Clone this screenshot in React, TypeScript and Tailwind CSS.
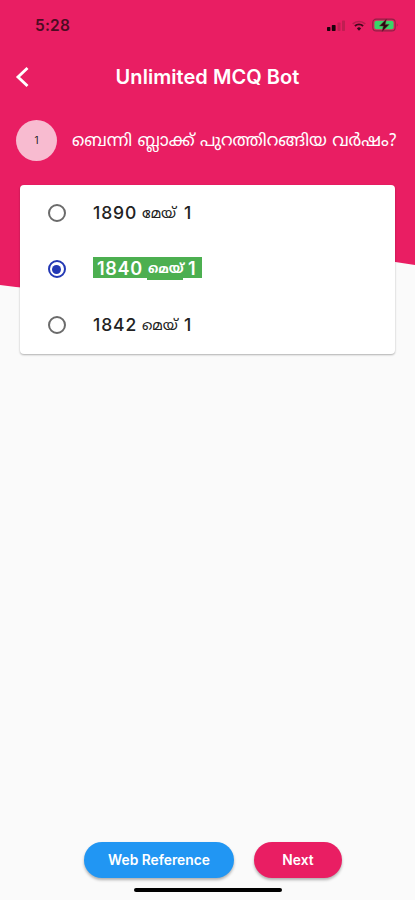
const latin = "font-[Inter,'Liberation_Sans',sans-serif]";
const malayalam =
  "font-['Noto_Sans_Malayalam','Malayalam_Sangam_MN','Noto_Sans',sans-serif]";

function StatusIcons() {
  return (
    <svg width="72" height="18" viewBox="0 0 72 18" className="block">
      <rect x="0" y="11" width="3.4" height="4" rx=".7" fill="#19030b" />
      <rect x="4.8" y="9" width="3.8" height="6" rx=".7" fill="#19030b" />
      <rect x="10.5" y="6.5" width="3" height="8.5" rx=".7" fill="#c01e52" />
      <rect x="15" y="4.5" width="3" height="10.5" rx=".7" fill="#c01e52" />
      <path d="M25.7 7.8a9.6 9.6 0 0 1 12.6 0" fill="none" stroke="#b51d4d" strokeWidth="1.6" />
      <path d="M27.9 10a6 6 0 0 1 8.2 0" fill="none" stroke="#42091c" strokeWidth="1.9" />
      <path d="M29.9 12.4a3 3 0 0 1 4.2 0l-2.1 2.4z" fill="#32091a" />
      <rect x="45.8" y="3.1" width="22.4" height="11.8" rx="3.4" fill="none" stroke="#8f2145" strokeWidth="1.1" />
      <rect x="47.4" y="4.7" width="19.2" height="8.6" rx="2" fill="#39d568" />
      <path d="M69.8 7.2q1.7 1.7 0 3.5z" fill="#8f2145" />
      <path d="M59.5 2.9 52.5 10h3.9l-1.3 5.5 7-7.1h-4z" fill="#26070f" stroke="#7c2038" strokeWidth=".5" />
    </svg>
  );
}

function Radio({ checked }: { checked?: boolean }) {
  return (
    <span
      className={
        checked
          ? "flex size-[18px] shrink-0 items-center justify-center rounded-full border-2 border-[#2338b4]"
          : "flex size-[18px] shrink-0 items-center justify-center rounded-full border-2 border-[#6b6b6b]"
      }
    >
      {checked && <span className="size-[9px] rounded-full bg-[#2338b4]" />}
    </span>
  );
}

function Option({ year, word, checked }: { year: string; word: string; checked?: boolean }) {
  return (
    <label className="flex h-[56px] items-center pl-[27.5px]">
      <Radio checked={checked} />
      {checked ? (
        <span className={`ml-[27.5px] flex h-[21px] w-[109px] -translate-y-[2px] items-start bg-[#4caf50] pl-1 text-[18px] leading-[23px] font-semibold text-white ${latin}`}>
          <span className="w-[50px] whitespace-nowrap tracking-[0.7px]">{year}</span>
          <span className={`h-[23px] w-[36px] bg-[#4caf50] pl-px text-[13px] leading-[27px] font-bold whitespace-nowrap ${malayalam}`}>{word}</span>
          <span className="ml-[5px]">1</span>
        </span>
      ) : (
        <span className={`ml-[27.5px] flex h-[21px] -translate-y-[1px] items-start text-[17.5px] leading-[21px] font-medium text-[#222] ${latin}`}>
          <span className="w-[49px] whitespace-nowrap tracking-[0.9px]">{year}</span>
          <span className={`w-[36px] text-[14.5px] leading-[26px] font-normal whitespace-nowrap ${malayalam}`}>{word}</span>
          <span className="ml-[6px]">1</span>
        </span>
      )}
    </label>
  );
}

export default function App() {
  return (
    <div className={`relative flex h-[900px] w-[415px] flex-col overflow-hidden bg-[#fafafa] ${latin}`}>
      <svg className="absolute inset-x-0 top-0" width="415" height="300" viewBox="0 0 415 300">
        <path d="M0 0H415V265Q311 248 208 273Q104 300 0 285Z" fill="#e91e63" />
      </svg>

      <div className="relative flex h-[50px] shrink-0 items-center justify-between pr-[16px] pl-[35px]">
        <span className="pt-[2px] text-[15.5px] font-semibold tracking-[0.2px] text-[#4d0b22]">5:28</span>
        <StatusIcons />
      </div>

      <header className="relative flex h-[54px] shrink-0 items-center">
        <svg width="32" height="24" viewBox="0 0 32 24" className="absolute left-0">
          <path d="M27.5 3 18 12l9.5 9" fill="none" stroke="white" strokeWidth="2.9" />
        </svg>
        <h1 className="w-full text-center text-[20px] font-semibold tracking-[0.05px] text-white">Unlimited MCQ Bot</h1>
      </header>

      <div className="relative flex h-[73px] shrink-0 items-center pl-4">
        <span className="flex size-[41px] shrink-0 items-center justify-center rounded-full bg-[#f8bbd0] text-[10px] text-[#222]">1</span>
        <p className={`ml-[15px] translate-y-px whitespace-nowrap text-[17.2px] leading-6 text-white ${malayalam}`}>ബെന്നി ബ്ലാക്ക് പുറത്തിറങ്ങിയ വർഷം?</p>
      </div>

      <main className="relative mx-5 mt-2 h-[169px] shrink-0 rounded-[4px] bg-white shadow-[0_1px_2px_rgba(0,0,0,0.3)]">
        <Option year="1890" word="മേയ്" />
        <Option year="1840" word="മെയ്" checked />
        <Option year="1842" word="മെയ്" />
      </main>

      <footer className="mt-auto flex h-[58px] shrink-0 flex-col">
        <div className="flex gap-[20px] pl-[84px]">
          <button className="h-[36px] w-[150px] rounded-full bg-[#2196f3] text-[13.8px] font-semibold text-white shadow-[0_2px_3px_rgba(0,0,0,0.3)]">Web Reference</button>
          <button className="h-[36px] w-[88px] rounded-full bg-[#e91e63] text-[13.8px] font-semibold text-white shadow-[0_2px_3px_rgba(0,0,0,0.3)]">Next</button>
        </div>
        <div className="mt-[10px] ml-[134px] h-[4px] w-[148px] rounded-full bg-black" />
      </footer>
    </div>
  );
}
